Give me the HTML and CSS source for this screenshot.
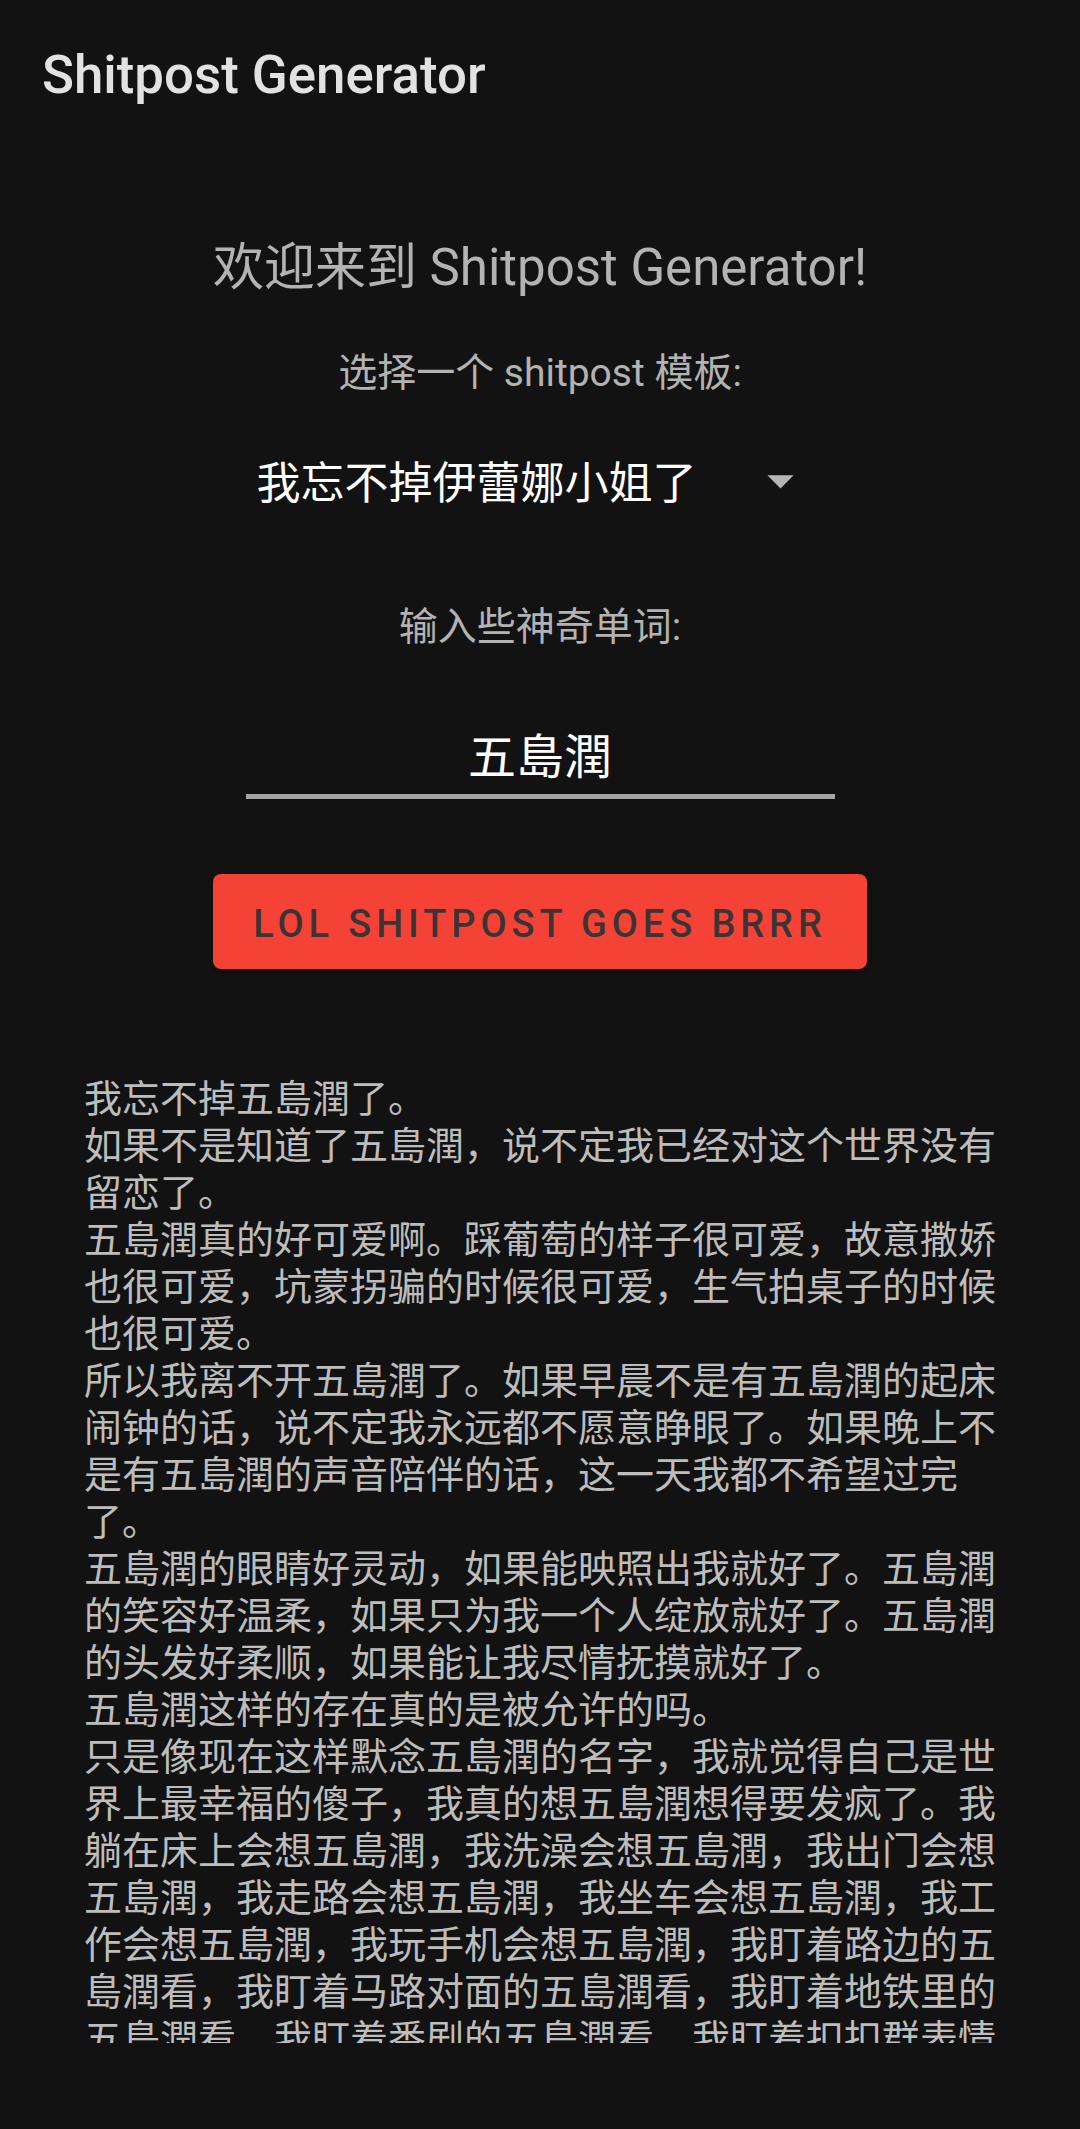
FILE: index.html
```html
<!DOCTYPE html>
<html lang="zh-CN">
<head>
<meta charset="utf-8">
<title>Shitpost Generator</title>
<link rel="stylesheet" href="styles.css">
</head>
<body>
<div class="app">
  <header class="appbar">
    <h1 class="appbar-title">Shitpost Generator</h1>
  </header>
  <main class="content">
    <h2 class="welcome">欢迎来到 Shitpost Generator!</h2>
    <p class="label label-template">选择一个 shitpost 模板:</p>
    <div class="dropdown">
      <span class="dropdown-value">我忘不掉伊蕾娜小姐了</span>
      <svg class="dropdown-icon" viewBox="0 0 24 24" aria-hidden="true"><path d="M7 10l5 5 5-5z"/></svg>
    </div>
    <p class="label label-words">输入些神奇单词:</p>
    <div class="input-field">
      <span class="input-value">五島潤</span>
    </div>
    <button class="go-button" type="button">LOL SHITPOST GOES BRRR</button>
    <div class="output">
      <p>我忘不掉五島潤了。</p>
      <p>如果不是知道了五島潤，说不定我已经对这个世界没有留恋了。</p>
      <p>五島潤真的好可爱啊。踩葡萄的样子很可爱，故意撒娇也很可爱，坑蒙拐骗的时候很可爱，生气拍桌子的时候也很可爱。</p>
      <p>所以我离不开五島潤了。如果早晨不是有五島潤的起床闹钟的话，说不定我永远都不愿意睁眼了。如果晚上不是有五島潤的声音陪伴的话，这一天我都不希望过完了。</p>
      <p>五島潤的眼睛好灵动，如果能映照出我就好了。五島潤的笑容好温柔，如果只为我一个人绽放就好了。五島潤的头发好柔顺，如果能让我尽情抚摸就好了。</p>
      <p>五島潤这样的存在真的是被允许的吗。</p>
      <p>只是像现在这样默念五島潤的名字，我就觉得自己是世界上最幸福的傻子，我真的想五島潤想得要发疯了。我躺在床上会想五島潤，我洗澡会想五島潤，我出门会想五島潤，我走路会想五島潤，我坐车会想五島潤，我工作会想五島潤，我玩手机会想五島潤，我盯着路边的五島潤看，我盯着马路对面的五島潤看，我盯着地铁里的五島潤看，我盯着番剧的五島潤看，我盯着扣扣群表情包里的五島潤看，我盯着手机屏幕里的五島潤看。</p>
    </div>
  </main>
</div>
</body>
</html>
```
FILE: styles.css
```css
html, body {
  margin: 0;
  padding: 0;
  background: #121212;
}

body {
  width: 1080px;
  height: 2129px;
  overflow: hidden;
  font-family: Roboto, "Noto Sans CJK SC", sans-serif;
}

.app {
  display: flex;
  flex-direction: column;
}

.appbar {
  height: 147px;
  padding-left: 42px;
  box-sizing: border-box;
  display: flex;
  align-items: center;
}

.appbar-title {
  margin: 0;
  padding-top: 3px;
  font-family: Roboto, sans-serif;
  font-weight: 500;
  font-size: 52.8px;
  line-height: 60px;
  color: #e2e2e2;
}

.content {
  display: flex;
  flex-direction: column;
  align-items: center;
}

.welcome {
  margin: 91px 0 0;
  font-weight: 400;
  font-size: 51px;
  line-height: 60px;
  color: #b3b3b3;
  text-align: center;
}

.label {
  margin: 0;
  font-size: 39px;
  line-height: 50px;
  color: #b3b3b3;
  text-align: center;
}

.label-template {
  margin-top: 50px;
}

.dropdown {
  margin-top: 55px;
  margin-right: 12px;
  height: 63px;
  display: flex;
  align-items: flex-start;
  gap: 52px;
}

.dropdown-value {
  font-size: 44px;
  line-height: 63px;
  color: #ffffff;
}

.dropdown-icon {
  width: 63px;
  height: 63px;
  margin-top: -4px;
  fill: #b5b5b5;
}

.label-words {
  margin-top: 86px;
}

.input-field {
  margin-top: 76px;
  width: 589px;
  padding-bottom: 6px;
  border-bottom: 5px solid #a4a4a4;
  text-align: center;
}

.input-value {
  display: block;
  font-size: 48px;
  line-height: 60px;
  color: #ffffff;
}

.go-button {
  margin-top: 75px;
  width: 654px;
  height: 95px;
  padding: 5px 0 0;
  border: none;
  border-radius: 8px;
  background: #f44336;
  color: #3c3434;
  font-family: Roboto, sans-serif;
  font-weight: 500;
  font-size: 38px;
  line-height: 90px;
  letter-spacing: 4.9px;
  box-shadow: 0 3px 1px -2px rgba(0, 0, 0, 0.2), 0 2px 2px 0 rgba(0, 0, 0, 0.14), 0 1px 5px 0 rgba(0, 0, 0, 0.12);
}

.output {
  margin-top: 103px;
  width: 912px;
  height: 971px;
  overflow: hidden;
  font-family: "Noto Sans CJK SC", sans-serif;
  font-size: 38px;
  line-height: 47px;
  color: #bdbdbd;
}

.output p {
  margin: 0;
}
```
